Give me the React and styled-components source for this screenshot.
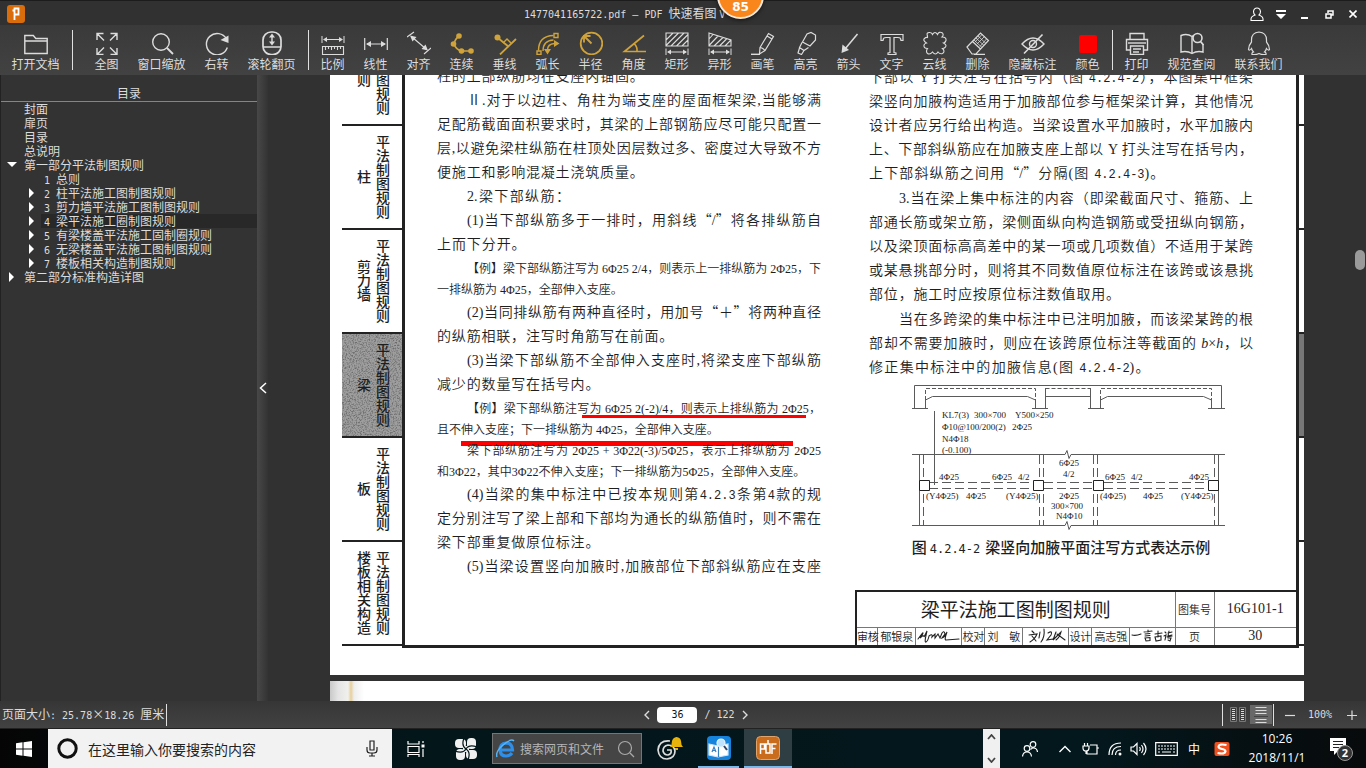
import React from 'react';
import styled, { createGlobalStyle } from 'styled-components';

const GlobalStyle = createGlobalStyle`
  * {
    box-sizing: border-box;
  }

  body {
    margin: 0;
    background: #313131;
    font-family: 'Noto Sans CJK SC', sans-serif;
    font-size: 12px;
  }

  button, input {
    font: inherit;
    color: inherit;
    border: 0;
    padding: 0;
    margin: 0;
    background: none;
  }

  svg {
    display: block;
    flex: none;
  }
`;

const Shell = styled.div`
  height: 100vh;
  display: grid;
  grid-template-rows: 25px 50px minmax(0, 1fr) 27px 40px;
  overflow: hidden;
  color: #dcdcdc;
`;

const Latin = styled.span`
  font-family: 'DejaVu Sans Mono', monospace;
  font-size: 10px;
  white-space: pre;
`;

/* ---------- title bar ---------- */

const TitleBar = styled.header`
  display: grid;
  grid-template-columns: 517px 1fr auto;
  align-items: center;
  padding: 0 1px 0 7px;
  background: #313131;
  border-top: 1px solid #1c1c1c;
`;

const TitleText = styled.h1`
  margin: 0;
  font-size: 12px;
  font-weight: 400;
  line-height: 24px;
  white-space: nowrap;
`;

const WindowButtons = styled.div`
  display: flex;
  color: #fff;
`;

const WindowButton = styled.button`
  width: 24px;
  height: 24px;
  display: grid;
  place-items: center;
`;

const Badge = styled.div`
  position: absolute;
  top: -28px;
  left: calc(50% + 34px);
  z-index: 2;
  width: 47px;
  height: 47px;
  display: flex;
  align-items: flex-end;
  justify-content: center;
  border: 2px solid #f4e6d8;
  border-radius: 50%;
  background: #f8861c;
  box-shadow: 0 1px 4px rgba(0, 0, 0, 0.6);
  color: #fff;
  font: bold 12px/20px 'DejaVu Sans', sans-serif;
`;

/* ---------- toolbar ---------- */

const Toolbar = styled.nav`
  display: flex;
  padding-left: 2px;
  background: linear-gradient(#3a3a3a, #424242);
`;

const Tool = styled.button`
  width: ${(p) => (p.$wide ? 67 : 43)}px;
  flex: none;
  display: flex;
  flex-direction: column;
  align-items: center;
  gap: 2px;
  padding-top: 6px;
  color: #dcdcdc;
  line-height: 14px;
  white-space: nowrap;

  svg {
    color: ${(p) => (p.$gold ? '#cfa33a' : '#dcdcdc')};
  }
`;

const ToolDivider = styled.span`
  width: 1px;
  height: 40px;
  flex: none;
  margin: 5px ${(p) => (p.$wide ? 12 : 2)}px 0 3px;
  background: #e0e0e0;
`;

const ToolGlyph = ({ children }) => (
  <svg width="24" height="24" viewBox="0 0 24 24" fill="none" stroke="currentColor" strokeWidth="1.4" aria-hidden="true">
    {children}
  </svg>
);

const Dimension = ({ y }) => (
  <g>
    <path d={`M1 ${y - 3.5}v7M23 ${y - 3.5}v7M3 ${y}h18`} strokeWidth="1" />
    <path d={`M2 ${y}l4-2.5v5zM22 ${y}l-4-2.5v5z`} fill="currentColor" stroke="none" />
  </g>
);

const icons = {
  open: <path d="M.8 22.5V4.5h8.5l2.5 3h11.4v15zM.8 10h22.4" />,
  fit: <path d="M2 9V2.5h6.5M2.5 3l6.5 6.5M22 9V2.5h-6.5M21.5 3L15 9.5M2 17v6.5h6.5M2.5 23L9 16.5M22 17v6.5h-6.5M21.5 23L15 16.5" />,
  zoom: (
    <>
      <circle cx="11" cy="11" r="8.3" />
      <path d="M17 17l6 6" strokeWidth="1.8" />
    </>
  ),
  rotate: (
    <>
      <path d="M21.5 8a10.7 10.7 0 1 0 .8 8.5" />
      <path d="M15.5 9L23.5 4.5v7.5z" fill="currentColor" stroke="none" />
    </>
  ),
  wheel: (
    <>
      <rect x="3" y="1" width="18" height="22.5" rx="8" strokeWidth="1.7" />
      <path d="M3 16h18M12 5v7" />
      <path d="M12 2.5l3 4H9zM12 14.5l3-4H9z" fill="currentColor" stroke="none" />
    </>
  ),
  scale: (
    <>
      <Dimension y={8.5} />
      <path d="M1.5 15.5h21v8h-21zM4.5 16v3M7.5 16v2M10.5 16v3M13.5 16v2M16.5 16v3M19.5 16v2" strokeWidth="1.1" />
    </>
  ),
  linear: (
    <>
      <path d="M.7 7v12M23.3 7v12M3 13h18" strokeWidth="1.2" />
      <path d="M2 13l5-3v6zM22 13l-5-3v6z" fill="currentColor" stroke="none" />
    </>
  ),
  align: (
    <>
      <path d="M0 6l7-5M17 23l7-6M5 6l14 12" strokeWidth="1.1" />
      <path d="M3 4.5l6.5 1.5-4 4.5zM21 19.5L14.5 18l4-4.5z" fill="currentColor" stroke="none" />
    </>
  ),
  chain: (
    <>
      <path d="M9 5q-4 3-5 8q2 6 8 7h9" strokeWidth="1.7" />
      <g fill="currentColor" stroke="none">
        <circle cx="9" cy="5" r="2.8" />
        <circle cx="3.5" cy="13" r="2.8" />
        <circle cx="11.5" cy="20" r="2.8" />
        <circle cx="21" cy="20" r="2.8" />
      </g>
    </>
  ),
  perpendicular: (
    <>
      <path d="M5 7l11 9M7 23.5L23 8" strokeWidth="1.8" />
      <path d="M10 12l4-4 4 4" />
      <circle cx="4.5" cy="6.5" r="3" fill="currentColor" stroke="none" />
    </>
  ),
  arc: (
    <>
      <path d="M2.5 19.5Q2.5 5 17.5 4.5M7 20Q7 9.5 17.5 9" />
      <path d="M1 20h4v3.5H1zM18 2.5h4v4h-4zM11.5 19q0-6 7-6.5" />
      <path d="M18 9l5.5 3.5-5.5 3.5zM8 18h7l-3.5 5.5z" fill="currentColor" stroke="none" />
    </>
  ),
  radius: (
    <>
      <circle cx="12.5" cy="12.5" r="10.8" strokeWidth="1.8" />
      <path d="M5.5 5.5l7 7M5 11.5V5h6.5" strokeWidth="1.8" />
    </>
  ),
  angle: <path d="M22 4.5L2.5 20.5H24M12.5 13q3 3 2.5 7.5" strokeWidth="1.7" />,
  rect: (
    <>
      <path d="M1 2h22v13H1zM1 9l7-7M1 14.5L13.5 2M6 15L19 2M11.5 15L23 3.5M17 15l6-6" strokeWidth="1.1" />
      <Dimension y={21} />
    </>
  ),
  shape: (
    <>
      <path d="M1 2l22 7v6H1zM1 8l4-4.5M1 14.5l9-9.5M6 15l9-8.5M11.5 15l7-7M17 15l5.5-5.5" strokeWidth="1.1" />
      <Dimension y={21} />
    </>
  ),
  pencil: (
    <>
      <path d="M9 16.5L17.5 2.5l5 3L14 19.5l-5.5 3.5zM9 16.5q3 .5 5 3M16 5l5 3" strokeWidth="1.2" />
      <path d="M0 23.3h9" />
    </>
  ),
  marker: <path d="M8.5 11L13 3l4-1.5 4.5 2.5v5L16 15zM8 11.5l-2.5 5L10 19.5l4.5-3M5.5 17L4 22l3.5 1.5L10 19.5" strokeWidth="1.2" />,
  arrow: (
    <>
      <path d="M20.5 3L8 18" strokeWidth="1.5" />
      <path d="M4.5 22l1-8.5 6.5 5.5z" fill="currentColor" stroke="none" />
    </>
  ),
  text: <path d="M1 3.5h22v6h-2q0-3-3-3h-4v15l2 .5v1.5H8v-1.5l2-.5v-15H6q-3 0-3 3H1z" strokeWidth="1.2" />,
  cloud: (
    <path
      d="M4.5 5Q3 1 7 1.5q2 .2 2.5 2q2.5-4 5 0Q16 0 19.5 2q1.5 2-.5 4q4.5 0 4 3.5q-.5 2-2.5 2.5q4 2 1.5 4.5q-1 1-2.5 1q3 3 0 5q-2.5 1-4.5-1.5q-2.5 4-5.5 0q-2.5 3-5 1.5q-2-2 0-5q-4 0-3.5-3.5q.5-1.5 2.5-2q-4.5-3-1.5-5q1-1 2.5-.5z"
      strokeWidth="1.1"
    />
  ),
  erase: (
    <>
      <path d="M1 16L14.5 2l8 7.5L10 23H6zM6.5 10.5l8 7.5M8 23.3h11" strokeWidth="1.2" />
      <path d="M8 9l8 7.5M10 7l8 7.5M12 5l8 7.5M11 13l7.5-7.5M14 15.5l6.5-7.5M9 11l7-7.5" strokeWidth=".8" />
    </>
  ),
  hide: (
    <>
      <path d="M1 13Q12 1 23 13Q12 25 1 13z" />
      <circle cx="12" cy="13" r="3.5" />
      <path d="M21.5 3.5L3 22.5" strokeWidth="1.6" />
    </>
  ),
  color: <rect x="3" y="4" width="18" height="18" rx="2" fill="#fe0000" stroke="none" />,
  print: (
    <>
      <path d="M5 8V2.5h14V8M5 19H1.5V8.5h21V19H19M5.5 15h13v8.5h-13zM8 18h8M8 21h6" />
      <path d="M3 12h18" />
    </>
  ),
  book: (
    <>
      <path d="M12 5.5Q7 2 1 4.5V21q6-1.5 11 1.5q5-3 11-1.5V13M12 5.5V22M12 5.5l2-1" />
      <circle cx="17.5" cy="7" r="4.5" strokeWidth="1.6" />
      <path d="M20.5 10.5L23.5 14" strokeWidth="1.8" />
    </>
  ),
  penguin: (
    <path
      d="M12 1Q4.5 1.5 4.5 9v2Q1.5 14.5 1.5 18.5q1 1.5 3-1q.5 2 2 3.5q-2 .5-1.5 2.5q4 .7 7-1q3 1.7 7 1q.5-2-1.5-2.5q1.5-1.5 2-3.5q2 2.5 3 1q0-4-3-7.5V9Q19.5 1.5 12 1z"
      strokeWidth="1.2"
    />
  ),
};

const tools = [
  ['open', '打开文档'],
  ['|', 'wide'],
  ['fit', '全图'],
  ['zoom', '窗口缩放'],
  ['rotate', '右转'],
  ['wheel', '滚轮翻页'],
  ['|'],
  ['scale', '比例'],
  ['linear', '线性'],
  ['align', '对齐'],
  ['chain', '连续', true],
  ['perpendicular', '垂线', true],
  ['arc', '弧长', true],
  ['radius', '半径', true],
  ['angle', '角度', true],
  ['rect', '矩形'],
  ['shape', '异形'],
  ['pencil', '画笔'],
  ['marker', '高亮'],
  ['arrow', '箭头'],
  ['text', '文字'],
  ['cloud', '云线'],
  ['erase', '删除'],
  ['hide', '隐藏标注'],
  ['color', '颜色'],
  ['|'],
  ['print', '打印'],
  ['book', '规范查阅'],
  ['penguin', '联系我们'],
];

/* ---------- outline ---------- */

const Main = styled.main`
  display: grid;
  grid-template-columns: 257px 11px minmax(0, 1fr);
  min-height: 0;
`;

const Sidebar = styled.aside`
  background: #333;
  border-left: 1px solid #222;
`;

const SidebarTitle = styled.h2`
  margin: 0;
  padding-top: 9px;
  height: 27px;
  border-bottom: 1px solid #858585;
  font-size: 12px;
  font-weight: 400;
  line-height: 18px;
  text-align: center;
`;

const Outline = styled.ul`
  margin: 0;
  padding: 0;
  list-style: none;
`;

const OutlineRow = styled.li`
  display: flex;
  align-items: center;
  height: 14px;
  padding-left: ${(p) => (p.$nested ? 26 : 6)}px;
`;

const Twisty = styled.span`
  width: ${(p) => (p.$nested ? 14 : 17)}px;
  flex: none;
  color: #fff;
`;

const OutlineLink = styled.a`
  flex: 1;
  height: 14px;
  padding-left: ${(p) => (p.$nested ? 3 : 0)}px;
  background: ${(p) => (p.$active ? '#282828' : 'transparent')};
  color: #dcdcdc;
  line-height: 14px;
  text-decoration: none;
  white-space: nowrap;
`;

const outline = [
  { text: '封面' },
  { text: '扉页' },
  { text: '目录' },
  { text: '总说明' },
  { text: '第一部分平法制图规则', arrow: 'down' },
  { no: 1, text: '总则' },
  { no: 2, text: '柱平法施工图制图规则', arrow: 'right' },
  { no: 3, text: '剪力墙平法施工图制图规则', arrow: 'right' },
  { no: 4, text: '梁平法施工圈制图规则', arrow: 'right', active: true },
  { no: 5, text: '有梁楼盖平法施工固制圈规则', arrow: 'right' },
  { no: 6, text: '无梁楼盖平法施工图制图规则', arrow: 'right' },
  { no: 7, text: '楼板相关构造制图规则', arrow: 'right' },
  { text: '第二部分标准构造详图', arrow: 'right' },
];

const Splitter = styled.button`
  display: grid;
  place-items: center;
  background: linear-gradient(90deg, #484848, #333);
  color: #fff;
`;

/* ---------- page ---------- */

const Viewer = styled.section`
  position: relative;
  display: flex;
  flex-direction: column;
  justify-content: flex-end;
  gap: 6px;
  padding: 0 62px;
  overflow: hidden;
  background: #313131;
`;

const ScrollThumb = styled.span`
  position: absolute;
  right: 1px;
  top: 28%;
  width: 10px;
  height: 20px;
  border-radius: 5px;
  background: #9a9a9a;
`;

const Sheet = styled.article`
  flex: none;
  display: grid;
  grid-template-columns: 60px minmax(0, 1fr) 5px;
  align-items: end;
  padding: 0 0 27px 12px;
  background: #fff;
  color: #1e1e1e;
`;

const NextSheet = styled.div`
  flex: none;
  height: 20px;
  background: linear-gradient(90deg, #c9c9c9, #e4e4e4 8px, #f0f0ee 18px, #e6cf9c 21px, #eee 24px, #fff 34px);
`;

const ChapterTabs = styled.div`
  padding-bottom: 2px;
`;

const ChapterTab = styled.div`
  position: relative;
  height: 104px;
  display: flex;
  flex-direction: row-reverse;
  align-items: center;
  justify-content: flex-start;
  padding-right: 10px;
  border-bottom: 2px solid #222;
  background: ${(p) => (p.$active ? '#9e9e9e' : '#fff')};
  font-size: 14px;
  font-weight: 500;
`;

const VerticalText = styled.span`
  position: relative;
  writing-mode: vertical-rl;
  line-height: 19px;
`;

const Grain = styled.svg`
  position: absolute;
  inset: 0;
  width: 100%;
  height: 100%;
`;

const EdgeTab = styled.div`
  height: 104px;
  border-bottom: 2px solid #222;
  background: ${(p) => (p.$active ? '#777' : '#fff')};
`;

const Frame = styled.div`
  align-self: stretch;
  display: flex;
  flex-direction: column;
  justify-content: flex-end;
  border: 3px solid #222;
  border-width: 0 3px 3px;
`;

const Columns = styled.div`
  display: grid;
  grid-template-columns: 1fr 1fr;
  align-items: end;
  column-gap: 48px;
  padding: 0 43px 11px 32px;
`;

const Column = styled.div`
  display: flex;
  flex-direction: column;
  gap: ${(p) => p.$gap || 0}px;
`;

const Paragraph = styled.p`
  margin: 0;
  font-family: 'Liberation Serif', 'Noto Sans CJK SC', serif;
  font-size: 14px;
  font-weight: 350;
  line-height: 24px;
  white-space: nowrap;
`;

const Example = styled(Paragraph)`
  padding-top: ${(p) => (p.$joined ? 0 : 2)}px;
  font-size: 12px;
  line-height: 21px;
`;

/* full lines are justified on a grid of 26 characters */
const Line = styled.span`
  position: relative;
  display: block;
  width: calc(100% * ${(p) => p.$chars || 26} / 26);
  padding-left: ${(p) => (p.$indent ? 30 : 0)}px;
  text-align: justify;
  text-align-last: ${(p) => (p.$natural ? 'left' : 'justify')};
`;

const Clause = styled.span`
  font-family: 'Liberation Mono', monospace;
  font-size: 12px;
  line-height: 1;
`;

const Quote = styled.span`
  font-family: 'Noto Sans CJK SC', sans-serif;
  line-height: 1;
`;

const RedMark = styled.span`
  position: absolute;
  top: ${(p) => p.$top}px;
  left: ${(p) => p.$left}px;
  width: ${(p) => p.$width}px;
  height: ${(p) => p.$weight}px;
  background: #fe0000;
`;

const Figure = styled.figure`
  margin: 0 0 20px;

  svg {
    width: 100%;
    height: 151px;
    margin-bottom: 3px;
  }
`;

const Caption = styled.figcaption`
  font-size: 15px;
  font-weight: 500;
  line-height: 24px;
  text-align: center;
  white-space: nowrap;

  span {
    font-family: 'DejaVu Sans Mono', monospace;
    font-size: 12px;
    font-weight: 400;
    line-height: 1;
    padding: 0 5px 0 3px;
  }
`;

const TitleBlock = styled.table`
  width: 440px;
  margin-left: auto;
  table-layout: fixed;
  border-collapse: collapse;
  border-top: 2px solid #222;
  border-left: 2px solid #222;

  td {
    height: 18px;
    padding: 0;
    border: 1px solid #777;
    border-width: 0 1px 0 0;
    font-size: 11px;
    font-weight: 350;
    line-height: 16px;
    text-align: center;
    white-space: nowrap;
  }

  td:last-child {
    border-right: 0;
    font-family: 'Liberation Serif', serif;
    font-size: 14px;
  }

  tr:first-child td {
    height: 36px;
    border-bottom-width: 1px;
  }

  tr:first-child td:first-child {
    font-size: 19px;
    font-weight: 400;
  }

  svg {
    margin: 0 auto;
  }
`;

const Signature = ({ d }) => (
  <svg width="44" height="16" viewBox="0 0 44 16" fill="none" stroke="#222" strokeWidth="1.1" strokeLinecap="round" aria-hidden="true">
    <path d={d} />
  </svg>
);

const BeamDrawing = () => (
  <svg viewBox="869 379 384 151" fill="none" stroke="#5a5a5a" strokeWidth="1" role="img" aria-label="梁竖向加腋平面注写">
    <path d="M914.5 406V383.5H1221.5V406M912 406.5h16M1032 406.5h16M1088 406.5h16M1208 406.5h17" />
    <path d="M925.5 406v-8l7-3.5h95l8 3.5v8M1045.5 406v-20M1045.5 394.5h45M1090.5 386v20M1100.5 406v-8l7-3.5h96l8 3.5v8" />
    <path d="M925.5 398v-11.5h110V398M1045.5 386.5h45M1100.5 398v-11.5h111V398" strokeDasharray="4 2" />
    <path d="M934.5 409v74" />
    <path d="M912 452.5h153l2-4 2 8 2-4h154M912 523.5h153l2-4 2 8 2-4h154M919.5 452v71M1218.5 452v71" />
    <path d="M923.5 453v70M1039.5 453v70M1043.5 453v70M1093.5 453v70M1097.5 453v70M1214.5 453v70" strokeDasharray="9 4" />
    <path d="M929 480.5h104M929 486.5h104M1044 480.5h50M1044 486.5h50M1104 480.5h104M1104 486.5h104" strokeDasharray="9 4" />
    <g fill="#fff" stroke="#222">
      <path d="M919.5 478.5h10v10h-10zM1033.5 478.5h10v10h-10zM1093.5 478.5h10v10h-10zM1208.5 478.5h10v10h-10z" />
    </g>
    <g fill="#222" stroke="none" fontFamily="Liberation Serif, serif" fontSize="9">
      <text x="942" y="416">KL7(3)</text>
      <text x="974" y="416">300×700</text>
      <text x="1015" y="416">Y500×250</text>
      <text x="942" y="428">Φ10@100/200(2)</text>
      <text x="1012" y="428">2Φ25</text>
      <text x="942" y="440">N4Φ18</text>
      <text x="942" y="451">(-0.100)</text>
      <text x="1059" y="464">6Φ25</text>
      <text x="1063" y="475">4/2</text>
      <text x="939" y="478">4Φ25</text>
      <text x="992" y="478">6Φ25</text>
      <text x="1018" y="478">4/2</text>
      <text x="1105" y="478">6Φ25</text>
      <text x="1131" y="478">4/2</text>
      <text x="1189" y="478">4Φ25</text>
      <text x="926" y="497">(Y4Φ25)</text>
      <text x="966" y="497">4Φ25</text>
      <text x="1006" y="497">(Y4Φ25)</text>
      <text x="1059" y="497">2Φ25</text>
      <text x="1100" y="497">(4Φ25)</text>
      <text x="1143" y="497">4Φ25</text>
      <text x="1181" y="497">(Y4Φ25)</text>
      <text x="1051" y="507">300×700</text>
      <text x="1056" y="517">N4Φ10</text>
    </g>
  </svg>
);

const chapters = ['总则', '柱', '剪力墙', '梁', '板', '楼板相关构造'];

const Document = () => (
  <Sheet>
    <ChapterTabs>
      {chapters.map((name) => (
        <ChapterTab key={name} $active={name === '梁'}>
          {name === '梁' && (
            <Grain aria-hidden="true">
              <filter id="grain">
                <feTurbulence type="fractalNoise" baseFrequency="0.7" numOctaves="2" />
                <feColorMatrix values="0 0 0 0 0.15  0 0 0 0 0.15  0 0 0 0 0.15  3 0 0 0 -1.3" />
              </filter>
              <rect width="100%" height="100%" filter="url(#grain)" />
            </Grain>
          )}
          <VerticalText>平法制图规则</VerticalText>
          <VerticalText>{name}</VerticalText>
        </ChapterTab>
      ))}
    </ChapterTabs>
    <Frame>
      <Columns>
        <Column>
          <Paragraph>
            <Line $chars={14}>柱的上部纵筋均在支座内锚固。</Line>
          </Paragraph>
          <Paragraph>
            <Line $indent>Ⅱ.对于以边柱、角柱为端支座的屋面框架梁,当能够满</Line>
            <Line>足配筋截面面积要求时，其梁的上部钢筋应尽可能只配置一</Line>
            <Line>层,以避免梁柱纵筋在柱顶处因层数过多、密度过大导致不方</Line>
            <Line $chars={14}>便施工和影响混凝土浇筑质量。</Line>
          </Paragraph>
          <Paragraph>
            <Line $indent $chars={9}>2.梁下部纵筋：</Line>
          </Paragraph>
          <Paragraph>
            <Line $indent>
              (1)当下部纵筋多于一排时，用斜线<Quote>“</Quote>/<Quote>”</Quote>将各排纵筋自
            </Line>
            <Line $chars={6}>上而下分开。</Line>
          </Paragraph>
          <Example>
            <Line $indent>【例】梁下部纵筋注写为 6Φ25 2/4，则表示上一排纵筋为 2Φ25，下</Line>
            <Line $natural>一排纵筋为 4Φ25，全部伸入支座。</Line>
          </Example>
          <Paragraph>
            <Line $indent>
              (2)当同排纵筋有两种直径时，用加号<Quote>“</Quote>＋<Quote>”</Quote>将两种直径
            </Line>
            <Line $chars={16}>的纵筋相联，注写时角筋写在前面。</Line>
          </Paragraph>
          <Paragraph>
            <Line $indent>(3)当梁下部纵筋不全部伸入支座时,将梁支座下部纵筋</Line>
            <Line $chars={11}>减少的数量写在括号内。</Line>
          </Paragraph>
          <Example>
            <Line $indent>
              【例】梁下部纵筋注写为 6Φ25 2(-2)/4，则表示上排纵筋为 2Φ25，
              <RedMark $top={16} $left={145} $width={224} $weight={3} />
            </Line>
            <Line $natural>
              且不伸入支座；下一排纵筋为 4Φ25，全部伸入支座。
              <RedMark $top={21} $left={24} $width={332} $weight={5} />
            </Line>
          </Example>
          <Example $joined>
            <Line $indent>梁下部纵筋注写为 2Φ25 + 3Φ22(-3)/5Φ25，表示上排纵筋为 2Φ25</Line>
            <Line $natural>和3Φ22，其中3Φ22不伸入支座；下一排纵筋为5Φ25，全部伸入支座。</Line>
          </Example>
          <Paragraph>
            <Line $indent>
              (4)当梁的集中标注中已按本规则第<Clause>4.2.3</Clause>条第<Clause>4</Clause>款的规
            </Line>
            <Line>定分别注写了梁上部和下部均为通长的纵筋值时，则不需在</Line>
            <Line $chars={11}>梁下部重复做原位标注。</Line>
          </Paragraph>
          <Paragraph>
            <Line $indent>(5)当梁设置竖向加腋时,加腋部位下部斜纵筋应在支座</Line>
          </Paragraph>
        </Column>
        <Column $gap={1}>
          <Paragraph>
            <Line>
              下部以 Y 打头注写在括号内（图 <Clause>4.2.4-2</Clause>），本图集中框架
            </Line>
            <Line>梁竖向加腋构造适用于加腋部位参与框架梁计算，其他情况</Line>
            <Line>设计者应另行给出构造。当梁设置水平加腋时，水平加腋内</Line>
            <Line>上、下部斜纵筋应在加腋支座上部以 Y 打头注写在括号内，</Line>
            <Line $chars={20}>
              上下部斜纵筋之间用<Quote>“</Quote>/<Quote>”</Quote>分隔(图 <Clause>4.2.4-3</Clause>)。
            </Line>
          </Paragraph>
          <Paragraph>
            <Line $indent>3.当在梁上集中标注的内容（即梁截面尺寸、箍筋、上</Line>
            <Line>部通长筋或架立筋，梁侧面纵向构造钢筋或受扭纵向钢筋，</Line>
            <Line>以及梁顶面标高高差中的某一项或几项数值）不适用于某跨</Line>
            <Line>或某悬挑部分时，则将其不同数值原位标注在该跨或该悬挑</Line>
            <Line $chars={17}>部位，施工时应按原位标注数值取用。</Line>
          </Paragraph>
          <Paragraph>
            <Line $indent>当在多跨梁的集中标注中已注明加腋，而该梁某跨的根</Line>
            <Line>部却不需要加腋时，则应在该跨原位标注等截面的 <i>b</i>×<i>h</i>，以</Line>
            <Line $chars={19}>
              修正集中标注中的加腋信息(图 <Clause>4.2.4-2</Clause>)。
            </Line>
          </Paragraph>
          <Figure>
            <BeamDrawing />
            <Caption>
              图<span>4.2.4-2</span>梁竖向加腋平面注写方式表达示例
            </Caption>
          </Figure>
        </Column>
      </Columns>
      <TitleBlock>
        <colgroup>
          {[22, 38, 46, 23, 38, 46, 23, 38, 45, 39, 82].map((w, i) => (
            <col key={i} style={{ width: w }} />
          ))}
        </colgroup>
        <tbody>
          <tr>
            <td colSpan={9}>梁平法施工图制图规则</td>
            <td>图集号</td>
            <td>16G101-1</td>
          </tr>
          <tr>
            <td>审核</td>
            <td>郁银泉</td>
            <td><Signature d="M1 11q5-7 5-6t-3 5q4-4 4-1l3-6q-3 12-1 11t3-6q4-3 3 1l3-3v4l3-4 2 4 2-5q2-3 3 1l-3 4q3-1 5-6q-3 8-1 8l13-1" /></td>
            <td>校对</td>
            <td>刘　敏</td>
            <td><Signature d="M8 3l2 2M5 7l8-1q-2 5-7 8M8 8l4 5M16 4l-1 6M20 1q1 8-3 13M24 5q5-3 3 2l-4 5 6-1M32 4l-3 8 8-8q-1 5-5 8M33 6l8 6" /></td>
            <td>设计</td>
            <td>高志强</td>
            <td><Signature d="M2 7q4 1 9-1M14 4l8-1M18 2v2M15 6l5-.5M15 8l5-.5M15 10l5-.5v3l-4 .5zM25 6l7-1M28 3v6M25 9l6-1v4l-5 1zM35 4l1 1M34 8l2-1-1 5M38 5l4-1M39 3l-1 5 4-1M37 9l5-1M38 10l3 0-1 3-2-1" /></td>
            <td>页</td>
            <td>30</td>
          </tr>
        </tbody>
      </TitleBlock>
    </Frame>
    <ChapterTabs>
      {chapters.map((name) => (
        <EdgeTab key={name} $active={name === '梁'} />
      ))}
    </ChapterTabs>
  </Sheet>
);

/* ---------- status bar ---------- */

const StatusBar = styled.footer`
  display: grid;
  grid-template-columns: 1fr auto 1fr;
  align-items: center;
  background: linear-gradient(#363636, #424242);
  line-height: 20px;
  white-space: nowrap;
`;

const PageSize = styled.span`
  justify-self: start;
  height: 22px;
  padding: 0 2px;
  border-right: 1px solid #e0e0e0;
`;

const Times = styled.span`
  display: inline-block;
  width: 12px;
  text-align: center;
`;

const Pager = styled.div`
  display: flex;
  align-items: center;
  gap: 7px;
  padding-left: 26px;
`;

const PageInput = styled.input`
  width: 40px;
  height: 16px;
  border-radius: 4px;
  background: #fff;
  color: #111;
  font: 10px 'DejaVu Sans Mono', monospace;
  text-align: center;
`;

const ViewControls = styled.div`
  justify-self: end;
  display: flex;
  align-items: center;
  padding-right: 9px;
`;

const ViewModes = styled.div`
  display: flex;
  align-items: center;
  gap: 4px;
  height: 22px;
  margin-right: 11px;
  padding: 0 1px 0 7px;
  border: solid #e0e0e0;
  border-width: 0 1px;
`;

const ModeButton = styled.button`
  height: 19px;
  padding: 0 ${(p) => (p.$active ? 4 : 0)}px;
  background: ${(p) => (p.$active ? '#686868' : 'transparent')};
`;

const ZoomLevel = styled(Latin)`
  margin: 0 15px 0 13px;
`;

/* ---------- taskbar ---------- */

const Taskbar = styled.footer`
  display: flex;
  align-items: stretch;
  background: linear-gradient(90deg, #050505, #03161a 30%, #03181d 80%, #080a0b);
  border-top: 1px solid #222;
  color: #fff;
`;

const TaskButton = styled.button`
  width: ${(p) => p.$w}px;
  flex: none;
  display: grid;
  place-items: center;
  border-bottom: ${(p) => (p.$running ? '2px solid #76b9ed' : '0')};
  background: ${(p) => (p.$active ? '#2f3e43' : 'transparent')};
  margin-right: ${(p) => p.$gap || 0}px;
`;

const Cortana = styled.label`
  width: 344px;
  display: flex;
  align-items: center;
  gap: 10px;
  padding: 0 14px 0 9px;
  background: #f2f2f2;
  color: #222;

  input {
    flex: 1;
    min-width: 0;
    font-size: 14px;
  }

  input::placeholder {
    color: #222;
  }
`;

const WebSearch = styled.label`
  width: 150px;
  display: flex;
  align-items: center;
  gap: 5px;
  margin: 4px 0;
  padding: 0 6px 0 3px;
  border: 1px solid #757575;
  background: #454545;

  input {
    flex: 1;
    min-width: 0;
    font-size: 12px;
  }

  input::placeholder {
    color: #b5b5b5;
  }
`;

const Scroller = styled.div`
  width: 17px;
  display: flex;
  flex-direction: column;
  align-items: center;
  justify-content: space-between;
  margin: 0 7px 0 auto;
  padding: 5px 0;
  background: #f0f0f0;
  color: #444;
`;

const Clock = styled.time`
  width: 76px;
  font: 12px/19px 'Open Sans', sans-serif;
  text-align: center;
`;

const Glyph = ({ w, h = w, children, sw = 1.2 }) => (
  <svg width={w} height={h} viewBox={`0 0 ${w} ${h}`} fill="none" stroke="currentColor" strokeWidth={sw} aria-hidden="true">
    {children}
  </svg>
);

const App = () => (
  <>
    <GlobalStyle />
    <Badge>85</Badge>
    <Shell>
      <TitleBar>
        <svg width="18" height="18" viewBox="0 0 18 18" aria-hidden="true">
          <rect width="18" height="18" rx="3" fill="#d96c0b" />
          <path d="M7.5 15V3.5h4v6h-4M5.5 5.5h2" fill="none" stroke="#fff" strokeWidth="1.8" />
        </svg>
        <TitleText>
          <Latin>1477041165722.pdf – PDF </Latin>快速看图 <Latin>V</Latin>
        </TitleText>
        <WindowButtons>
          <WindowButton aria-label="账户">
            <Glyph w={14} h={15} sw={1.1}>
              <path d="M5 8Q3.5 6.5 3.5 4.5Q4 1 7 1t3.5 3.5Q10.5 6.5 9 8q4 1.5 4 4v1.5H1V12q0-2.5 4-4z" />
            </Glyph>
          </WindowButton>
          <WindowButton aria-label="菜单">
            <Glyph w={10} h={9}>
              <path d="M0 0h10v2H0zM0 4h10L5 9z" fill="currentColor" stroke="none" />
            </Glyph>
          </WindowButton>
          <WindowButton aria-label="最小化">
            <Glyph w={8} h={9} sw={2}><path d="M0 8h7" /></Glyph>
          </WindowButton>
          <WindowButton aria-label="还原">
            <Glyph w={9} h={9} sw={1.5}><path d="M3 3V1h5v4H6M1 4h5v4H1z" /></Glyph>
          </WindowButton>
          <WindowButton aria-label="关闭">
            <Glyph w={8} h={8} sw={1.6}><path d="M.5.5l7 7M7.5.5l-7 7" /></Glyph>
          </WindowButton>
        </WindowButtons>
      </TitleBar>

      <Toolbar>
        {tools.map(([icon, label, gold], i) =>
          icon === '|' ? (
            <ToolDivider key={i} $wide={label === 'wide'} />
          ) : (
            <Tool key={icon} $wide={label.length > 2} $gold={gold}>
              <ToolGlyph>{icons[icon]}</ToolGlyph>
              {label}
            </Tool>
          )
        )}
      </Toolbar>

      <Main>
        <Sidebar>
          <SidebarTitle>目录</SidebarTitle>
          <Outline>
            {outline.map(({ no, text, arrow, active }) => (
              <OutlineRow key={text} $nested={!!no}>
                <Twisty $nested={!!no}>
                  {arrow && (
                    <Glyph w={10} h={10}>
                      <path d={arrow === 'down' ? 'M0 2h10L5 7z' : 'M2 0v10l5-5z'} fill="currentColor" stroke="none" />
                    </Glyph>
                  )}
                </Twisty>
                <OutlineLink href="#" $nested={!!no} $active={active}>
                  {no && <Latin>{`${no} `}</Latin>}
                  {text}
                </OutlineLink>
              </OutlineRow>
            ))}
          </Outline>
        </Sidebar>
        <Splitter aria-label="收起目录">
          <Glyph w={8} h={12} sw={1.5}><path d="M7 1L1.5 6 7 11" /></Glyph>
        </Splitter>
        <Viewer>
          <Document />
          <NextSheet />
          <ScrollThumb />
        </Viewer>
      </Main>

      <StatusBar>
        <PageSize>
          页面大小<Latin>: 25.78</Latin><Times>×</Times><Latin>18.26 </Latin>厘米
        </PageSize>
        <Pager>
          <button aria-label="上一页"><Glyph w={6} h={10} sw={1.4}><path d="M5 1L1 5l4 4" /></Glyph></button>
          <PageInput aria-label="页码" defaultValue="36" />
          <Latin>/ 122</Latin>
          <button aria-label="下一页"><Glyph w={6} h={10} sw={1.4}><path d="M1 1l4 4-4 4" /></Glyph></button>
        </Pager>
        <ViewControls>
          <ViewModes>
            <ModeButton aria-label="双页">
              <Glyph w={16} h={19} sw={1}>
                <path d="M.5 2.5h6v14h-6zM9.5 2.5h6v14h-6z" stroke="#777" />
                <path d="M3.5 4v12M12.5 4v12" strokeWidth="3" strokeDasharray="1 1" />
              </Glyph>
            </ModeButton>
            <ModeButton aria-label="连续" $active>
              <Glyph w={14} h={19} sw={1}>
                <path d="M1.5 2.5h11M1.5 5.5h11M1.5 8.5h11M1.5 14.5h11M1.5 17.5h11" />
                <path d="M0 11.5h14" stroke="#444" />
              </Glyph>
            </ModeButton>
          </ViewModes>
          <button aria-label="缩小"><Glyph w={10} h={10}><path d="M0 5.5h10" /></Glyph></button>
          <ZoomLevel>100%</ZoomLevel>
          <button aria-label="放大"><Glyph w={10} h={10}><path d="M0 5.5h10M5 .5v10" /></Glyph></button>
        </ViewControls>
      </StatusBar>

      <Taskbar>
        <TaskButton $w={48} aria-label="开始">
          <Glyph w={16} h={16}>
            <path d="M0 2.2l6.5-.9v6.2H0zM7.5 1.2L16 0v7.5H7.5zM0 8.5h6.5v6.2L0 13.8zM7.5 8.5H16V16l-8.5-1.2z" fill="currentColor" stroke="none" />
          </Glyph>
        </TaskButton>
        <Cortana>
          <Glyph w={21} h={21} sw={3}><circle cx="10.5" cy="10.5" r="8.7" stroke="#111" /></Glyph>
          <input aria-label="在这里输入你要搜索的内容" placeholder="在这里输入你要搜索的内容" />
          <Glyph w={12} h={17} sw={1.2}>
            <path d="M4 1h4v9H4zM1 7v3q0 3 3 3h4q3 0 3-3V7M6 13v3M3 16h6" />
          </Glyph>
        </Cortana>
        <TaskButton $w={48} aria-label="任务视图">
          <Glyph w={18} h={16}>
            <path d="M1 0v3h11V0M1 5.5h11v6H1zM1 16v-2.5h11V16M16 0v2M16 8v8" />
            <path d="M14.5 3.5h3v3h-3z" fill="currentColor" stroke="none" />
          </Glyph>
        </TaskButton>
        <TaskButton $w={52} aria-label="风车">
          <Glyph w={22} h={22}>
            <g fill="#f0f0f0" stroke="none">
              <rect x="0" y="1" width="11" height="9" rx="4" />
              <rect x="12" y="0" width="9" height="11" rx="4" />
              <rect x="11" y="12" width="11" height="9" rx="4" />
              <rect x="1" y="11" width="9" height="11" rx="4" />
              <rect x="8" y="8" width="6" height="6" />
            </g>
            <path d="M11 11Q6 8 9 0M11 11Q14 6 22 9M11 11Q16 14 13 22M11 11Q8 16 0 13" stroke="#03161a" />
          </Glyph>
        </TaskButton>
        <WebSearch>
          <Glyph w={19} h={20} sw={3.2}>
            <path d="M4 11h12.5Q16.5 4 10 4Q4 4.5 4 11Q4.5 17 10 17Q14 17 16 14" stroke="#2f8fe8" />
            <path d="M1 18Q-1 13 7 6T18 2" stroke="#55b4f5" strokeWidth="1.5" />
          </Glyph>
          <input aria-label="搜索网页和文件" placeholder="搜索网页和文件" />
          <Glyph w={18} h={18}><g stroke="#aaa"><circle cx="8" cy="8" r="6.5" /><path d="M13 13l4 4" /></g></Glyph>
        </WebSearch>
        <TaskButton $w={56} aria-label="浏览器">
          <Glyph w={28} h={28} sw={1.7}>
            <path d="M14 6Q3 5 2 15q1 9 9 9q8-1 8-8q-1-6-7-6q-5 1-5 6q1 4 5 4q4-1 3-5h-4" stroke="#ddd" />
            <path d="M14 12q2-2 2-6q1-3.5 4.5-4q4 .5 4.5 4q0 4 2 6zM19 13h3v2h-3z" fill="#e8b40c" stroke="none" />
          </Glyph>
        </TaskButton>
        <TaskButton $w={41} $gap={5} $running aria-label="阅读">
          <Glyph w={24} h={24}>
            <rect width="24" height="24" rx="4" fill="#1683dc" stroke="none" />
            <path d="M2 8l9 2 10-2v11l-10 2-9-2z" fill="#fff" stroke="#cfe6fa" />
            <path d="M11.5 10v11M5 16l2-5 2 5M5.5 14.5h3" stroke="#3b7fc0" />
            <circle cx="14" cy="7" r="4" fill="#bfe3ff" stroke="#e9f5ff" />
            <path d="M17 10l3 4" stroke="#346" strokeWidth="2" />
          </Glyph>
        </TaskButton>
        <TaskButton $w={48} $running $active aria-label="PDF">
          <svg width="24" height="24" viewBox="0 0 24 24" aria-hidden="true">
            <rect x=".5" y=".5" width="23" height="23" rx="4" fill="#c96c1b" stroke="#e0a36c" />
            <path d="M4.5 18V8h4v5h-4M10 8h4v9h-4zM12 8V4M16 18V8h4.5M16 12.5h3.5" fill="none" stroke="#fff" strokeWidth="1.5" />
          </svg>
        </TaskButton>
        <Scroller>
          <Glyph w={9} h={6} sw={1.8}><path d="M1 5l3.5-4L8 5" /></Glyph>
          <Glyph w={9} h={6} sw={1.8}><path d="M1 1l3.5 4L8 1" /></Glyph>
        </Scroller>
        <TaskButton $w={46} aria-label="人脉">
          <Glyph w={16} h={16}>
            <circle cx="5" cy="7.5" r="2.8" />
            <path d="M.5 15.5Q1 11 5 11t4.5 4.5M8.5 8.5Q10 7 11.5 7q3.5 0 4 4" />
            <circle cx="11" cy="3.5" r="2.8" />
          </Glyph>
        </TaskButton>
        <TaskButton $w={24} aria-label="显示隐藏的图标">
          <Glyph w={12} h={8} sw={1.4}><path d="M.5 7L6 1.5 11.5 7" /></Glyph>
        </TaskButton>
        <TaskButton $w={26} aria-label="电池">
          <Glyph w={17} h={14}><path d="M8 3h7v9H5V9M15.5 6h1.5M1 4h6v2q0 3-3 3T1 6zM2.5 4V1M5.5 4V1M4 9v3" /></Glyph>
        </TaskButton>
        <TaskButton $w={24} aria-label="网络">
          <Glyph w={14} h={14}>
            <path d="M1 13Q1 1 13 1M4 13q0-8.5 9-8.5M7.5 13q0-5 5.5-5" />
            <circle cx="12" cy="12" r="1.5" fill="currentColor" stroke="none" />
          </Glyph>
        </TaskButton>
        <TaskButton $w={22} aria-label="音量">
          <Glyph w={17} h={14}><path d="M1 5h2.5L7 1.5v11L3.5 9H1zM9.5 5q1.5 2 0 4M11.5 3q3 4 0 8M13.5 1q5 6 0 12" /></Glyph>
        </TaskButton>
        <TaskButton $w={34} aria-label="键盘">
          <Glyph w={23} h={14}>
            <path d="M.7.7h21.6v12.6H.7z" />
            <path d="M3 4h17M3 7h17" strokeDasharray="2 1" />
            <path d="M3 10h2M7 10h9M18 10h2" />
          </Glyph>
        </TaskButton>
        <TaskButton $w={22}>中</TaskButton>
        <TaskButton $w={34} aria-label="搜狗输入法">
          <Glyph w={16} h={16}>
            <rect x=".5" y="1" width="15" height="14" rx="2" fill="#f0501e" stroke="none" />
            <path d="M12.5 4Q5 2.5 4.5 5.5Q4.5 7.5 8 8t3.5 2.5Q11 13.5 3.5 12" stroke="#fff" strokeWidth="2.2" />
          </Glyph>
        </TaskButton>
        <Clock>
          10:26
          <br />
          2018/11/1
        </Clock>
        <TaskButton $w={51} aria-label="2 条新通知">
          <svg width="26" height="26" viewBox="0 0 26 26" aria-hidden="true">
            <path d="M2 2h16v13h-8l-4 4v-4H2z" fill="#fff" />
            <path d="M5 5.5h10M5 8.5h10M5 11.5h6" stroke="#222" />
            <circle cx="17" cy="17" r="7.5" fill="#333" stroke="#999" />
            <text x="17" y="21" textAnchor="middle" fill="#fff" fontFamily="Open Sans, sans-serif" fontSize="11" fontWeight="700">2</text>
          </svg>
        </TaskButton>
      </Taskbar>
    </Shell>
  </>
);

export default App;
